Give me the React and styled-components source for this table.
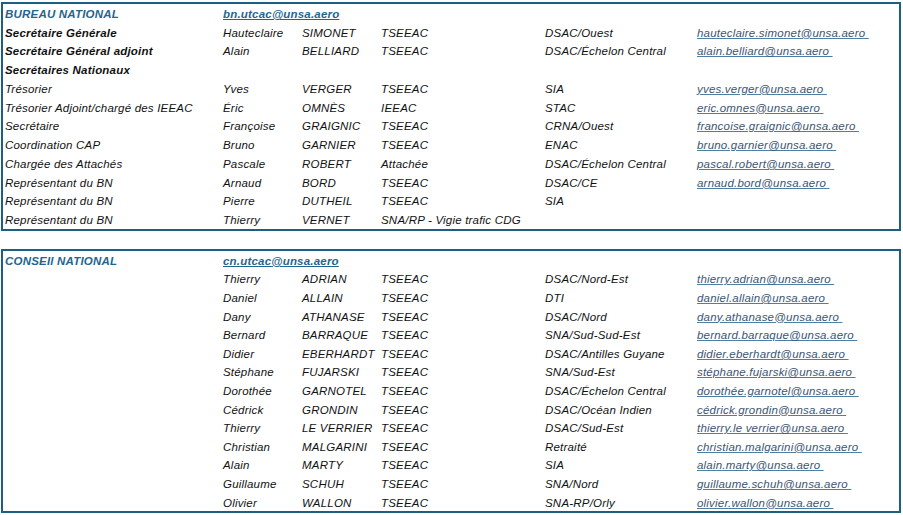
import styled, { createGlobalStyle } from "styled-components";

const GlobalStyle = createGlobalStyle`
  body {
    margin: 0;
    background: #fff;
    font-family: "Liberation Sans", Arial, sans-serif;
  }
`;

const bureau = [
  { label: "Secrétaire Générale", strong: true, first: "Hauteclaire", last: "SIMONET", grade: "TSEEAC", service: "DSAC/Ouest", email: "hauteclaire.simonet@unsa.aero" },
  { label: "Secrétaire Général adjoint", strong: true, first: "Alain", last: "BELLIARD", grade: "TSEEAC", service: "DSAC/Échelon Central", email: "alain.belliard@unsa.aero" },
  { label: "Secrétaires Nationaux", strong: true },
  { label: "Trésorier", first: "Yves", last: "VERGER", grade: "TSEEAC", service: "SIA", email: "yves.verger@unsa.aero" },
  { label: "Trésorier Adjoint/chargé des IEEAC", first: "Éric", last: "OMNÈS", grade: "IEEAC", service: "STAC", email: "eric.omnes@unsa.aero" },
  { label: "Secrétaire", first: "Françoise", last: "GRAIGNIC", grade: "TSEEAC", service: "CRNA/Ouest", email: "francoise.graignic@unsa.aero" },
  { label: "Coordination CAP", first: "Bruno", last: "GARNIER", grade: "TSEEAC", service: "ENAC", email: "bruno.garnier@unsa.aero" },
  { label: "Chargée des Attachés", first: "Pascale", last: "ROBERT", grade: "Attachée", service: "DSAC/Échelon Central", email: "pascal.robert@unsa.aero" },
  { label: "Représentant du BN", first: "Arnaud", last: "BORD", grade: "TSEEAC", service: "DSAC/CE", email: "arnaud.bord@unsa.aero" },
  { label: "Représentant du BN", first: "Pierre", last: "DUTHEIL", grade: "TSEEAC", service: "SIA" },
  { label: "Représentant du BN", first: "Thierry", last: "VERNET", grade: "SNA/RP - Vigie trafic CDG" },
];

const conseil = [
  { first: "Thierry", last: "ADRIAN", grade: "TSEEAC", service: "DSAC/Nord-Est", email: "thierry.adrian@unsa.aero" },
  { first: "Daniel", last: "ALLAIN", grade: "TSEEAC", service: "DTI", email: "daniel.allain@unsa.aero" },
  { first: "Dany", last: "ATHANASE", grade: "TSEEAC", service: "DSAC/Nord", email: "dany.athanase@unsa.aero" },
  { first: "Bernard", last: "BARRAQUE", grade: "TSEEAC", service: "SNA/Sud-Sud-Est", email: "bernard.barraque@unsa.aero" },
  { first: "Didier", last: "EBERHARDT", grade: "TSEEAC", service: "DSAC/Antilles Guyane", email: "didier.eberhardt@unsa.aero" },
  { first: "Stéphane", last: "FUJARSKI", grade: "TSEEAC", service: "SNA/Sud-Est", email: "stéphane.fujarski@unsa.aero" },
  { first: "Dorothée", last: "GARNOTEL", grade: "TSEEAC", service: "DSAC/Échelon Central", email: "dorothée.garnotel@unsa.aero" },
  { first: "Cédrick", last: "GRONDIN", grade: "TSEEAC", service: "DSAC/Océan Indien", email: "cédrick.grondin@unsa.aero" },
  { first: "Thierry", last: "LE VERRIER", grade: "TSEEAC", service: "DSAC/Sud-Est", email: "thierry.le verrier@unsa.aero" },
  { first: "Christian", last: "MALGARINI", grade: "TSEEAC", service: "Retraité", email: "christian.malgarini@unsa.aero" },
  { first: "Alain", last: "MARTY", grade: "TSEEAC", service: "SIA", email: "alain.marty@unsa.aero" },
  { first: "Guillaume", last: "SCHUH", grade: "TSEEAC", service: "SNA/Nord", email: "guillaume.schuh@unsa.aero" },
  { first: "Olivier", last: "WALLON", grade: "TSEEAC", service: "SNA-RP/Orly", email: "olivier.wallon@unsa.aero" },
];

const Section = ({ title, email, rows, rowHeight }) => (
  <Box>
    <Row $h={rowHeight}>
      <Cell $head>{title}</Cell>
      <Cell $head $link>{email}</Cell>
    </Row>
    {rows.map((r, i) => (
      <Row key={i} $h={rowHeight}>
        <Cell $strong={r.strong}>{r.label}</Cell>
        <Cell>{r.first}</Cell>
        <Cell>{r.last}</Cell>
        <Cell>{r.grade}</Cell>
        <Cell>{r.service}</Cell>
        <Cell $mail>{r.email ? r.email + "\u00a0" : ""}</Cell>
      </Row>
    ))}
  </Box>
);

export default function App() {
  return (
    <>
      <GlobalStyle />
      <Page>
        <Section title="BUREAU NATIONAL" email="bn.utcac@unsa.aero" rows={bureau} rowHeight={18.75} />
        <Section title="CONSEIl NATIONAL" email="cn.utcac@unsa.aero" rows={conseil} rowHeight={18.6} />
      </Page>
    </>
  );
}

const Page = styled.div`
  display: flex;
  flex-direction: column;
  gap: 18px;
  padding: 2px 0 0 1px;
  width: 900px;
`;

const Box = styled.div`
  border: 2px solid #1c5f82;
  padding: 0 0 0 2px;
  display: flex;
  flex-direction: column;
`;

const Row = styled.div`
  display: grid;
  grid-template-columns: 218px 79px 79px 164px 152px 1fr;
  height: ${(p) => p.$h}px;
  padding-top: 1px;
  box-sizing: border-box;
  align-items: center;
`;

const Cell = styled.div`
  font-size: 11.5px;
  font-style: italic;
  letter-spacing: 0.2px;
  white-space: nowrap;
  color: #111;
  font-weight: ${(p) => (p.$strong || p.$head ? "bold" : "normal")};
  ${(p) => p.$head && "color: #1f6590;"}
  ${(p) => p.$link && "text-decoration: underline; grid-column: 2 / span 3;"}
  ${(p) => p.$mail && "color: #3b5573; text-decoration: underline; text-decoration-color: #4d7fa3;"}
`;
